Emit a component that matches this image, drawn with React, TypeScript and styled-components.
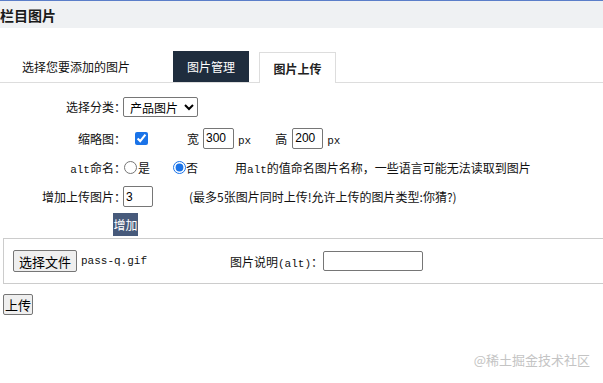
import styled, { createGlobalStyle } from "styled-components";

const GlobalStyle = createGlobalStyle`
  html, body {
    margin: 0;
    padding: 0;
    background: #fff;
    overflow: hidden;
  }
  body {
    font-family: "Noto Sans CJK SC", "Liberation Sans", sans-serif;
    font-size: 12px;
    color: #111;
  }
`;

const Page = styled.div`
  position: relative;
  width: 603px;
  height: 383px;
  overflow: hidden;
`;

const Header = styled.div`
  height: 27px;
  border-top: 1px solid #5b7ec9;
  background: #eff1f3;
  display: flex;
  align-items: center;
  font-size: 14px;
  font-weight: bold;
  color: #1a1a1a;
`;

const TabBar = styled.div`
  margin-top: 22px;
  display: flex;
  align-items: flex-end;
  border-bottom: 1px solid #ddd;
  height: 32px;
`;

const Intro = styled.div`
  width: 151px;
  padding-left: 22px;
  align-self: center;
  font-size: 12px;
`;

const Tab = styled.div<{ $active?: boolean }>`
  box-sizing: border-box;
  display: flex;
  align-items: center;
  justify-content: center;
  font-size: 12px;
  margin-right: 10px;
  ${({ $active }) =>
    $active
      ? `
    width: 77px;
    height: 31px;
    margin-bottom: -1px;
    background: #fff;
    border: 1px solid #ddd;
    border-bottom: none;
    font-weight: bold;
    color: #222;
  `
      : `
    width: 76px;
    height: 31px;
    background: #1f2d3e;
    color: #fff;
  `}
`;

const Form = styled.div`
  padding-top: 9px;
`;

const Row = styled.div<{ $h: number }>`
  display: flex;
  align-items: center;
  height: ${({ $h }) => $h}px;
`;

const Label = styled.div`
  width: 126px;
  text-align: right;
  white-space: nowrap;
  margin-right: -3px;
`;

const Mono = styled.span`
  font-family: "Liberation Mono", "DejaVu Sans Mono", monospace;
  font-size: 11px;
`;

const Select = styled.select`
  margin-left: 0;
  height: 20px;
  width: 75px;
  font-family: "Noto Sans CJK SC", sans-serif;
  font-size: 12px;
  border: 1px solid #767676;
  border-radius: 2px;
  background: #fff;
  padding: 0 0 0 2px;
`;

const Check = styled.input`
  margin: 0 0 0 12px;
  width: 13px;
  height: 13px;
  accent-color: #1a73e8;
`;

const TextInput = styled.input<{ $w: number; $h?: number }>`
  box-sizing: border-box;
  width: ${({ $w }) => $w}px;
  height: ${({ $h }) => $h ?? 21}px;
  border: 1px solid #767676;
  border-radius: 2px;
  padding: 0 2px;
  font-family: "Liberation Sans", sans-serif;
  font-size: 12px;
  outline: none;
`;

const Text = styled.span<{ $ml?: number; $mr?: number }>`
  margin-left: ${({ $ml }) => $ml ?? 0}px;
  margin-right: ${({ $mr }) => $mr ?? 0}px;
  white-space: nowrap;
`;

const Radio = styled.input`
  margin: 0;
  width: 13px;
  height: 13px;
  accent-color: #1a73e8;
`;

const RadioGroup = styled.label<{ $ml: number }>`
  display: flex;
  align-items: center;
  margin-left: ${({ $ml }) => $ml}px;
`;

const AddButton = styled.button`
  margin-left: 113px;
  width: 25px;
  height: 23px;
  padding: 0;
  border: none;
  background: #475a7b;
  color: #fff;
  font-family: "Noto Sans CJK SC", sans-serif;
  font-size: 12px;
  display: block;
`;

const FileBox = styled.div`
  box-sizing: border-box;
  margin: 2px 0 0 3px;
  width: 620px;
  height: 46px;
  border: 1px solid #ccc;
  display: flex;
  align-items: center;
  padding-left: 9px;
`;

const NativeButton = styled.button<{ $w: number; $h: number }>`
  box-sizing: border-box;
  width: ${({ $w }) => $w}px;
  height: ${({ $h }) => $h}px;
  padding: 0;
  border: 1px solid #767676;
  border-radius: 2px;
  background: #efefef;
  color: #000;
  font-family: "Noto Sans CJK SC", sans-serif;
  font-size: 13px;
`;

const FileName = styled.span`
  margin-left: 4px;
  width: 149px;
  font-family: "Liberation Mono", "DejaVu Sans Mono", monospace;
  font-size: 11px;
`;

const UploadWrap = styled.div`
  margin: 10px 0 0 3px;
`;

const Watermark = styled.div`
  position: absolute;
  right: 13px;
  bottom: 14px;
  font-size: 13px;
  color: #c4c4c4;
`;

export default function App() {
  return (
    <Page>
      <GlobalStyle />
      <Header>栏目图片</Header>
      <TabBar>
        <Intro>选择您要添加的图片</Intro>
        <Tab>图片管理</Tab>
        <Tab $active>图片上传</Tab>
      </TabBar>
      <Form>
        <Row $h={29}>
          <Label>选择分类：</Label>
          <Select defaultValue="p">
            <option value="p">产品图片</option>
          </Select>
        </Row>
        <Row $h={34}>
          <Label>缩略图：</Label>
          <Check type="checkbox" defaultChecked />
          <Text $ml={39} $mr={4}>宽</Text>
          <TextInput $w={31} defaultValue="300" />
          <Text $ml={4}>
            <Mono>px</Mono>
          </Text>
          <Text $ml={24} $mr={5}>高</Text>
          <TextInput $w={31} defaultValue="200" />
          <Text $ml={4}>
            <Mono>px</Mono>
          </Text>
        </Row>
        <Row $h={25}>
          <Label>
            <Mono>alt</Mono>命名：
          </Label>
          <RadioGroup $ml={1}>
            <Radio type="radio" name="alt" />
            <Text $ml={1}>是</Text>
          </RadioGroup>
          <RadioGroup $ml={23}>
            <Radio type="radio" name="alt" defaultChecked />
            <Text>否</Text>
          </RadioGroup>
          <Text $ml={37}>
            用<Mono>alt</Mono>的值命名图片名称，一些语言可能无法读取到图片
          </Text>
        </Row>
        <Row $h={33}>
          <Label>增加上传图片：</Label>
          <TextInput $w={30} defaultValue="3" />
          <Text $ml={36}>(最多5张图片同时上传!允许上传的图片类型:你猜?)</Text>
        </Row>
        <AddButton>增加</AddButton>
      </Form>
      <FileBox>
        <NativeButton $w={64} $h={22}>选择文件</NativeButton>
        <FileName>pass-q.gif</FileName>
        <Text>
          图片说明<Mono>(alt)</Mono>：
        </Text>
        <TextInput $w={100} $h={20} />
      </FileBox>
      <UploadWrap>
        <NativeButton $w={30} $h={21}>上传</NativeButton>
      </UploadWrap>
      <Watermark>@稀土掘金技术社区</Watermark>
    </Page>
  );
}
